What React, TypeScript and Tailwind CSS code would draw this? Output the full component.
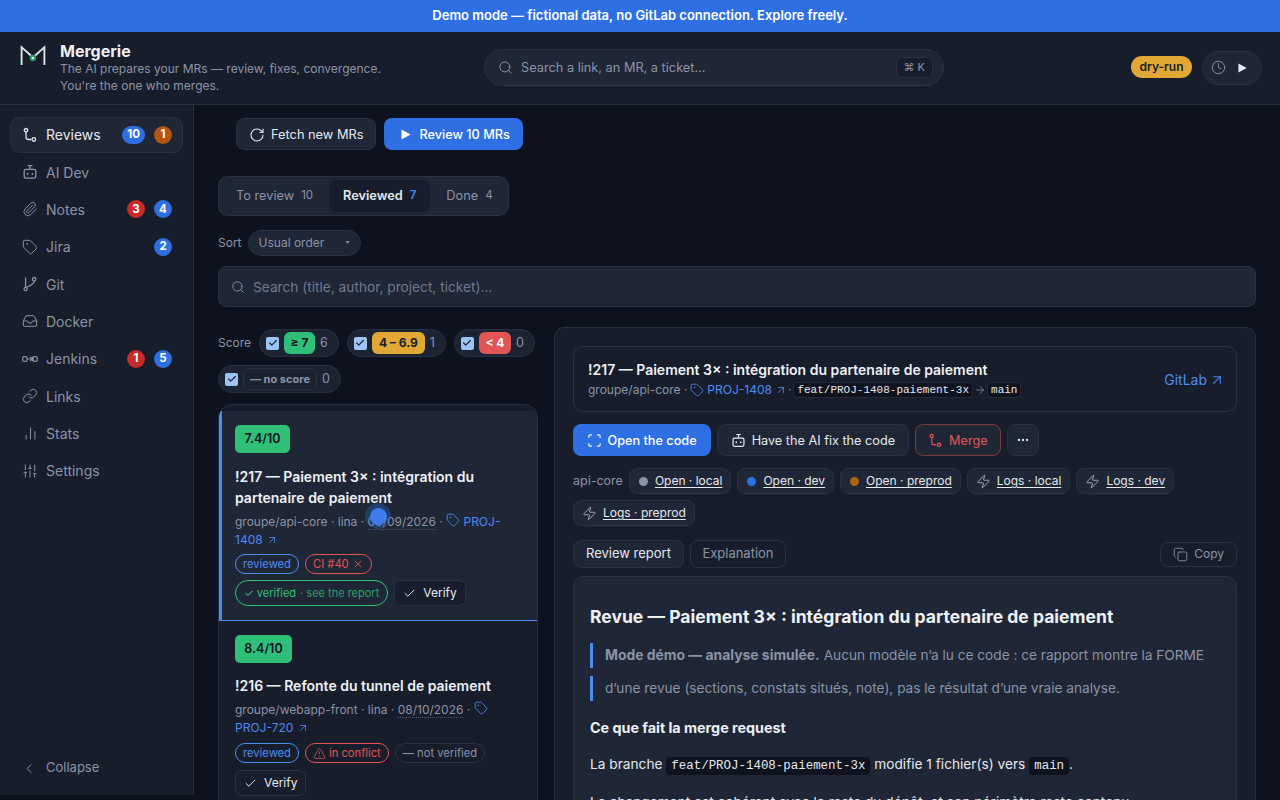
import { ArrowRight, ArrowUpRight, Check, ChevronLeft, Clock, Copy, Ellipsis, Inbox, Link as LinkIcon, Paperclip, RotateCw, Scan, Search, SlidersVertical, Tag, TriangleAlert, X, Zap, ChartNoAxesColumn } from 'lucide-react';

const MrIcon = ({ className = '' }: { className?: string }) => (
  <svg viewBox="0 0 16 16" fill="none" stroke="currentColor" strokeWidth="1.3" className={className}>
    <circle cx="4" cy="3.2" r="1.7" />
    <path d="M4 5v5c0 1.5 1 2.5 2.5 2.5H9" />
    <circle cx="11.8" cy="12.5" r="1.8" />
  </svg>
);

const BranchIcon = ({ className = '' }: { className?: string }) => (
  <svg viewBox="0 0 16 16" fill="none" stroke="currentColor" strokeWidth="1.3" className={className}>
    <circle cx="3.6" cy="13" r="1.6" />
    <circle cx="12.2" cy="3.2" r="1.7" />
    <path d="M3.6 11.4V1.5" />
    <path d="M12.2 5c0 3.4-4 4.6-8.2 6.6" />
  </svg>
);

const PipeIcon = ({ className = '' }: { className?: string }) => (
  <svg viewBox="0 0 16 16" fill="none" stroke="currentColor" strokeWidth="1.2" className={className}>
    <rect x="0.7" y="5.7" width="4.4" height="4.6" rx="1.6" />
    <path d="M5 8h5M8.2 6l2 2-2 2" />
    <path d="M10.6 5.7v4.6" />
    <rect x="11" y="5.7" width="4.3" height="4.6" rx="1.6" />
  </svg>
);

const BotIcon = ({ className = '' }: { className?: string }) => (
  <svg viewBox="0 0 16 16" fill="none" stroke="currentColor" strokeWidth="1.3" className={className}>
    <rect x="2.2" y="5.4" width="11.6" height="8.8" rx="1.6" />
    <path d="M8 5.4V1.8M5.6 1.6h4.8" />
    <path d="M5.6 9.6v.6M10.4 9.6v.6" strokeWidth="1.6" strokeLinecap="round" />
  </svg>
);

const PlayIcon = ({ className = '' }: { className?: string }) => (
  <svg viewBox="0 0 10 11" fill="currentColor" className={className}>
    <path d="M0.5 0.4 9.6 5.5 0.5 10.6Z" />
  </svg>
);

const Logo = () => (
  <svg viewBox="0 0 26 22" className="w-[26px] h-[22px] shrink-0" fill="none">
    <path d="M1.6 20V2.2L13 12.5 24.4 2.2V20" stroke="#e7ebf2" strokeWidth="1.8" />
    <circle cx="12.9" cy="13" r="2.3" fill="#fff" stroke="#1f9d63" strokeWidth="2" />
  </svg>
);

const Count = ({ n, color }: { n: number; color: string }) => (
  <span className={`${color} h-[18px] min-w-[18px] px-[5px] rounded-full text-white text-[11.5px] font-bold flex items-center justify-center leading-none`}>{n}</span>
);

const nav = [
  { label: 'Reviews', icon: <MrIcon className="w-4 h-4" />, badges: [{ n: 10, color: 'bg-[#2f6fe4]' }, { n: 1, color: 'bg-[#b4560f]' }], active: true },
  { label: 'AI Dev', icon: <BotIcon className="w-4 h-4" />, badges: [] },
  { label: 'Notes', icon: <Paperclip size={16} strokeWidth={1.5} />, badges: [{ n: 3, color: 'bg-[#c92a2a]' }, { n: 4, color: 'bg-[#2f6fe4]' }] },
  { label: 'Jira', icon: <Tag size={16} strokeWidth={1.5} />, badges: [{ n: 2, color: 'bg-[#2f6fe4]' }] },
  { label: 'Git', icon: <BranchIcon className="w-4 h-4" />, badges: [] },
  { label: 'Docker', icon: <Inbox size={16} strokeWidth={1.5} />, badges: [] },
  { label: 'Jenkins', icon: <PipeIcon className="w-4 h-4" />, badges: [{ n: 1, color: 'bg-[#c92a2a]' }, { n: 5, color: 'bg-[#2f6fe4]' }] },
  { label: 'Links', icon: <LinkIcon size={16} strokeWidth={1.5} />, badges: [] },
  { label: 'Stats', icon: <ChartNoAxesColumn size={15} strokeWidth={1.6} />, badges: [] },
  { label: 'Settings', icon: <SlidersVertical size={16} strokeWidth={1.5} />, badges: [] },
];

const ScorePill = ({ label, count, badge }: { label: string; count: number; badge: string }) => (
  <div className="h-[28px] flex items-center gap-[5px] pl-[6px] pr-[10px] rounded-full bg-[#1c2331] border border-[#283040]">
    <span className="w-[13px] h-[13px] rounded-[2px] bg-[#9cc4f7] flex items-center justify-center">
      <Check size={10} strokeWidth={3} className="text-[#1c2331]" />
    </span>
    <span className={`${badge} h-[22px] rounded-[6px] font-bold flex items-center justify-center`}>{label}</span>
    <span className="text-[12.5px] text-[#8b94a7]">{count}</span>
  </div>
);

const Tagline = ({ className, children }: { className: string; children: React.ReactNode }) => (
  <span className={`h-[20px] px-[7px] rounded-full border text-[11.2px] flex items-center gap-[3px] ${className}`}>{children}</span>
);

const VerifyBtn = () => (
  <button className="h-[26px] px-[8px] rounded-[7px] border border-[#2a3242] bg-[#171d2b] text-[12px] text-[#e6e9f0] flex items-center gap-[7px]">
    <Check size={13} strokeWidth={1.8} />
    Verify
  </button>
);

const EnvLink = ({ icon, label }: { icon: React.ReactNode; label: string }) => (
  <span className="h-[26px] px-[8px] rounded-[8px] bg-[#1f2635] border border-[#2a3242] text-[12px] text-[#e6e9f0] flex items-center gap-[6px]">
    {icon}
    <span className="underline underline-offset-2">{label}</span>
  </span>
);

const Dot = ({ color }: { color: string }) => <span className={`${color} w-[9px] h-[9px] rounded-full mx-[1px]`} />;

const ZapIcon = () => <Zap size={15} strokeWidth={1.4} className="text-[#b4bac6]" />;

const Code = ({ children }: { children: React.ReactNode }) => (
  <code className="bg-[#0f1320] border border-[#232a39] rounded-[4px] px-[3px] text-[11px] leading-[14px] text-[#e6e9f0] font-['Liberation_Mono',monospace]">{children}</code>
);

const BodyCode = ({ children }: { children: React.ReactNode }) => (
  <code className="bg-[#0f1320] rounded-[4px] px-[5px] py-[2px] text-[12.45px] text-[#e6e9f0] font-['Liberation_Mono',monospace]">{children}</code>
);

export default function App() {
  return (
    <div className="h-screen overflow-hidden flex flex-col bg-[#0e121e] text-[#e6e9f0] font-['Inter',sans-serif]">
      <div className="h-8 shrink-0 bg-[#2f6fe4] text-white text-[13px] font-semibold flex items-center justify-center">
        Demo mode — fictional data, no GitLab connection. Explore freely.
      </div>

      <header className="h-[73px] shrink-0 bg-[#171d2b] border-b border-[#283040] flex items-center pl-5 pr-[18px] pb-[1px]">
        <div className="w-[464px] shrink-0 flex items-start gap-[14px]">
          <div className="pt-[4px]"><Logo /></div>
          <div className="pt-[1px]">
            <div className="text-[16px] font-bold leading-[18px] text-[#eef1f6]">Mergerie</div>
            <div className="text-[12px] leading-[17px] text-[#8b94a7]">The AI prepares your MRs — review, fixes, convergence.<br />You're the one who merges.</div>
          </div>
        </div>
        <div className="w-[460px] h-[37px] shrink-0 rounded-full bg-[#1f2635] border border-[#2a3242] flex items-center pl-[13px] pr-[6px] gap-[8px]">
          <Search size={15} strokeWidth={1.6} className="text-[#8b94a7]" />
          <span className="text-[12.75px] text-[#8b94a7] flex-1">Search a link, an MR, a ticket...</span>
          <span className="h-[21px] px-[7px] mr-[4px] rounded-[6px] bg-[#171d2b] border border-[#2a3242] text-[11px] text-[#8b94a7] flex items-center">⌘ K</span>
        </div>
        <div className="ml-auto flex items-center gap-[10px]">
          <span className="h-[22px] mb-[1px] px-[8.5px] rounded-full bg-[#e2a835] text-[#171d2b] text-[12px] font-semibold flex items-center">dry-run</span>
          <div className="h-[34px] w-[60px] rounded-full bg-[#1f2635] border border-[#2a3242] flex items-center pl-[8px] gap-[12px]">
            <Clock size={15} strokeWidth={1.5} className="text-[#8b94a7]" />
            <PlayIcon className="w-[9px] h-[10px] text-[#e6e9f0]" />
          </div>
        </div>
      </header>

      <div className="flex-1 min-h-0 flex">
        <aside className="w-[194px] shrink-0 h-[690px] bg-[#171d2b] border-r border-[#283040] flex flex-col pl-[10px] pr-[10px] pt-[11.8px] pb-[13px]">
          <nav className="flex flex-col gap-[1.33px]">
            {nav.map((item) => (
              <div key={item.label} className={`h-[36px] pl-[11px] pr-[10px] rounded-[10px] border flex items-center gap-[8px] text-[14px] ${item.active ? 'bg-[#1f2635] border-[#2a3242] text-[#e6e9f0]' : 'border-transparent text-[#8b94a7]'}`}>
                <span className="w-4 flex justify-center">{item.icon}</span>
                <span className="flex-1">{item.label}</span>
                <div className="flex gap-[9px]">
                  {item.badges.map((b, i) => <Count key={i} n={b.n} color={b.color} />)}
                </div>
              </div>
            ))}
          </nav>
          <div className="mt-auto h-[28px] px-[11px] flex items-center gap-[9px] text-[13px] text-[#8b94a7]">
            <ChevronLeft size={15} strokeWidth={1.6} className="w-4" />
            Collapse
          </div>
        </aside>

        <main className="flex-1 min-w-0 pl-6 pr-6 pt-[13px] overflow-hidden">
          <div className="flex gap-2 pl-[18px]">
            <button className="h-8 px-[12px] rounded-[8px] bg-[#1f2635] border border-[#2a3242] text-[12.8px] text-[#e6e9f0] flex items-center gap-[6px] pt-[1px]">
              <RotateCw size={16} strokeWidth={1.6} />
              Fetch new MRs
            </button>
            <button className="h-8 pl-[17px] pr-[13px] rounded-[8px] bg-[#2f6fe4] text-[12.7px] font-medium text-white flex items-center gap-[8px] pt-[1px]">
              <PlayIcon className="w-[10px] h-[11px]" />
              Review 10 MRs
            </button>
          </div>

          <div className="mt-[26px] w-[291px] h-[40px] p-[3px] rounded-[10px] bg-[#1f2635] border border-[#2a3242] flex items-center text-[12.75px] text-[#8b94a7]">
            <div className="h-full pl-[14px] pr-[16px] flex items-center gap-[7px] whitespace-nowrap">To review <span className="text-[11.5px]">10</span></div>
            <div className="h-full px-[14px] rounded-[7px] bg-[#171d2b] text-[#e6e9f0] font-semibold flex items-center gap-[7px]">Reviewed <span className="text-[11.5px] text-[#4d8bf5]">7</span></div>
            <div className="h-full pl-[16px] pr-[14px] flex items-center gap-[7px]">Done <span className="text-[11.5px]">4</span></div>
          </div>

          <div className="mt-[14px] h-[26px] flex items-center gap-[6px] text-[12px] text-[#8b94a7]">
            Sort
            <span className="h-[26px] w-[113px] px-[10px] rounded-full bg-[#1f2635] border border-[#2a3242] flex items-center justify-between">
              Usual order
              <span className="text-[4px]">▼</span>
            </span>
          </div>

          <div className="mt-[10px] h-[41px] rounded-[8px] bg-[#1f2635] border border-[#2a3242] flex items-center px-[12px] gap-[8px] pt-[1px]">
            <Search size={14} strokeWidth={1.6} className="text-[#8b94a7]" />
            <span className="text-[13.7px] text-[#707a8e]">Search (title, author, project, ticket)...</span>
          </div>

          <div className="mt-[20px] flex gap-4 items-start">
            <div className="w-[320px] shrink-0 pt-[2px]">
              <div className="flex flex-wrap items-center gap-x-2 gap-y-2">
                <span className="text-[12px] text-[#8b94a7]">Score</span>
                <ScorePill label="≥ 7" count={6} badge="w-[31px] text-[12px] bg-[#2fbf78] text-[#0f1320]" />
                <ScorePill label="4 – 6.9" count={1} badge="w-[53px] text-[12px] bg-[#e2a835] text-[#171d2b]" />
                <ScorePill label="< 4" count={0} badge="w-[32px] text-[12px] bg-[#e25555] text-white" />
                <ScorePill label="— no score" count={0} badge="w-[74px] text-[11px] border border-[#2a3242] text-[#8b94a7]" />
              </div>

              <div className="mt-[11px] rounded-t-[14px] border border-[#283040] bg-[#171d2b] pt-[6px] overflow-hidden">
                <div className="relative bg-[#1f2635] border-l-[3px] border-l-[#4d8bf5] border-b border-b-[#4d8bf5] pl-[13px] pr-[14px] pt-[14px] pb-[14px]">
                  <span className="h-[28px] w-[55px] rounded-[5px] bg-[#2fbf78] text-[#0f1320] text-[12.5px] font-semibold flex items-center justify-center">7.4/10</span>
                  <div className="mt-[13px] text-[14px] leading-[21px] font-semibold text-[#eef1f6]">!217 — Paiement 3× : intégration du partenaire de paiement</div>
                  <div className="mt-[5px] text-[12px] leading-[17.5px] text-[#8b94a7]">
                    groupe/api-core · lina · <span className="border-b border-dotted border-[#4b5468]">08/09/2026</span> · <Tag size={14} strokeWidth={1.5} className="inline text-[#4d8bf5] align-[-1px]" /> <span className="text-[#4d8bf5]">PROJ-1408 <ArrowUpRight size={12} strokeWidth={1.6} className="inline align-[-2px]" /></span>
                  </div>
                  <div className="mt-[6px] flex gap-[6px]">
                    <Tagline className="border-[#4d8bf5] text-[#4d8bf5]">reviewed</Tagline>
                    <Tagline className="border-[#e25555] text-[#e25555]">CI #40 <X size={12} strokeWidth={1.6} /></Tagline>
                  </div>
                  <div className="mt-[6px] flex gap-[6px] items-center">
                    <span className="h-[26px] px-[8px] rounded-full border border-[#2fbf78] text-[#2fbf78] text-[11px] flex items-center whitespace-nowrap">✓ verified<span className="opacity-80 ml-[4px]">· see the report</span></span>
                    <VerifyBtn />
                  </div>
                  <span className="absolute left-[143px] top-[92px] w-[26px] h-[26px] rounded-full bg-[#2f6fe4]/30 flex items-center justify-center">
                    <span className="w-[17px] h-[17px] rounded-full bg-[#3c7cec]" />
                  </span>
                </div>
                <div className="pl-[16px] pr-[14px] pt-[14px] pb-[14px]">
                  <span className="h-[28px] w-[57px] rounded-[5px] bg-[#2fbf78] text-[#0f1320] text-[12.5px] font-semibold flex items-center justify-center">8.4/10</span>
                  <div className="mt-[12px] text-[14px] leading-[21px] font-semibold text-[#eef1f6]">!216 — Refonte du tunnel de paiement</div>
                  <div className="mt-[5px] text-[12px] leading-[17.5px] text-[#8b94a7]">
                    groupe/webapp-front · lina · <span className="border-b border-dotted border-[#4b5468]">08/10/2026</span> · <Tag size={14} strokeWidth={1.5} className="inline text-[#4d8bf5] align-[-1px]" /> <span className="text-[#4d8bf5]">PROJ-720 <ArrowUpRight size={12} strokeWidth={1.6} className="inline align-[-2px]" /></span>
                  </div>
                  <div className="mt-[7px] flex gap-[6px]">
                    <Tagline className="border-[#4d8bf5] text-[#4d8bf5]">reviewed</Tagline>
                    <Tagline className="border-[#e25555] text-[#e25555]"><TriangleAlert size={13} strokeWidth={1.4} /> in conflict</Tagline>
                    <Tagline className="border-[#2a3242] text-[#8b94a7]">— not verified</Tagline>
                  </div>
                  <div className="mt-[7px]"><VerifyBtn /></div>
                </div>
              </div>
            </div>

            <div className="flex-1 min-w-0 h-[600px] rounded-t-[10px] border border-[#283040] bg-[#171d2b] px-[18px] pt-[18px]">
              <div className="h-[66px] rounded-[10px] border border-[#2a3242] flex items-center justify-between pl-[14px] pr-[11px] pt-[1px]">
                <div>
                  <div className="text-[14px] font-semibold leading-[20px] text-[#eef1f6]">!217 — Paiement 3× : intégration du partenaire de paiement</div>
                  <div className="text-[12px] leading-[20px] text-[#8b94a7] flex items-center gap-[2px]">
                    groupe/api-core · <Tag size={14} strokeWidth={1.5} className="text-[#4d8bf5] ml-[1px]" /> <span className="text-[#4d8bf5] flex items-center gap-[3px] ml-[1px]">PROJ-1408 <ArrowUpRight size={12} strokeWidth={1.6} /></span> <span className="-ml-[1px]">·</span> <Code>feat/PROJ-1408-paiement-3x</Code><ArrowRight size={12} strokeWidth={1.5} className="-mx-[1px]" /><Code>main</Code>
                  </div>
                </div>
                <span className="text-[14px] text-[#4d8bf5] flex items-center gap-[2px]">GitLab <ArrowUpRight size={16} strokeWidth={1.6} /></span>
              </div>

              <div className="mt-[12px] flex gap-[6px] text-[12.7px]">
                <button className="h-8 pl-[13.5px] pr-[14px] pt-[1px] rounded-[8px] bg-[#2f6fe4] font-medium text-white flex items-center gap-[6px]"><Scan size={15} strokeWidth={1.8} />Open the code</button>
                <button className="h-8 px-[13px] pt-[1px] rounded-[8px] bg-[#1f2635] border border-[#2a3242] text-[#e6e9f0] flex items-center gap-[6px]"><BotIcon className="w-[15px] h-[15px]" />Have the AI fix the code</button>
                <button className="h-8 px-[12px] pt-[1px] rounded-[8px] bg-[#1f2635] border border-[#7d3a41] text-[#e25555] flex items-center gap-[6px]"><MrIcon className="w-[15px] h-[15px]" />Merge</button>
                <button className="h-8 w-8 rounded-[8px] bg-[#1f2635] border border-[#2a3242] text-[#e6e9f0] flex items-center justify-center"><Ellipsis size={14} /></button>
              </div>

              <div className="mt-[12px] flex flex-wrap items-center gap-[6px]">
                <span className="text-[12.5px] text-[#8b94a7]">api-core</span>
                <EnvLink icon={<Dot color="bg-[#8b94a7]" />} label="Open · local" />
                <EnvLink icon={<Dot color="bg-[#2f6fe4]" />} label="Open · dev" />
                <EnvLink icon={<Dot color="bg-[#a86410]" />} label="Open · preprod" />
                <EnvLink icon={<ZapIcon />} label="Logs · local" />
                <EnvLink icon={<ZapIcon />} label="Logs · dev" />
                <EnvLink icon={<ZapIcon />} label="Logs · preprod" />
              </div>

              <div className="mt-[14px] flex items-center gap-[6px]">
                <span className="h-[28px] px-[12px] rounded-[8px] bg-[#1f2635] border border-[#2a3242] text-[13px] text-[#e6e9f0] flex items-center">Review report</span>
                <span className="h-[28px] w-[96px] rounded-[8px] border border-[#2a3242] text-[13px] text-[#8b94a7] flex items-center justify-center">Explanation</span>
                <span className="ml-auto h-[25px] px-[12px] rounded-[8px] border border-[#2a3242] text-[12px] text-[#8b94a7] flex items-center gap-[6px]"><Copy size={15} strokeWidth={1.4} />Copy</span>
              </div>

              <div className="mt-[8px] h-[300px] rounded-t-[10px] bg-[#1f2635] border border-[#2a3242] px-[16px] pt-[28px] overflow-hidden">
                <h2 className="text-[17.55px] leading-[24px] font-bold text-[#eef1f6]">Revue — Paiement 3× : intégration du partenaire de paiement</h2>
                <div className="mt-[14px] flex flex-col gap-[8px] text-[13.65px] text-[#8b94a7]">
                  <div className="h-[25px] border-l-[3px] border-[#4d8bf5] pl-[12px] flex items-center whitespace-nowrap"><strong className="text-[13.9px] font-bold mr-[4px]">Mode démo — analyse simulée.</strong> Aucun modèle n’a lu ce code : ce rapport montre la FORME</div>
                  <div className="h-[25px] border-l-[3px] border-[#4d8bf5] pl-[12px] flex items-center whitespace-nowrap">d’une revue (sections, constats situés, note), pas le résultat d’une vraie analyse.</div>
                </div>
                <h3 className="mt-[17px] text-[14.3px] leading-[20px] font-bold text-[#eef1f6]">Ce que fait la merge request</h3>
                <p className="mt-[15px] text-[13.7px] leading-[22px] text-[#e6e9f0]">La branche <BodyCode>feat/PROJ-1408-paiement-3x</BodyCode> modifie 1 fichier(s) vers <BodyCode>main</BodyCode>.</p>
                <p className="mt-[14px] text-[13.7px] leading-[22px] text-[#e6e9f0]">Le changement est cohérent avec le reste du dépôt, et son périmètre reste contenu.</p>
              </div>
            </div>
          </div>
        </main>
      </div>
    </div>
  );
}
